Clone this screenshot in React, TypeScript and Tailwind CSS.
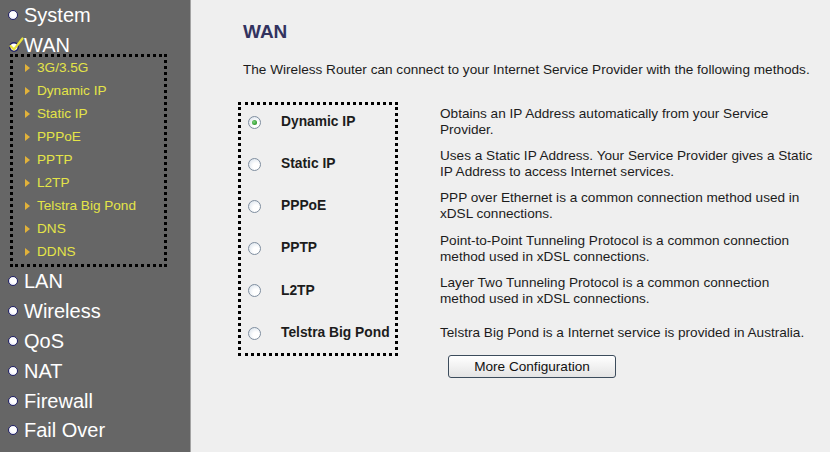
import React from "react";

const FONT = "font-['Liberation_Sans',Arial,Helvetica,sans-serif]";

function Bullet() {
  return (
    <span className="inline-block w-[10px] h-[10px] rounded-full border-[1.5px] border-[#23236a] bg-[radial-gradient(circle_at_60%_35%,#ffffff_45%,#ececf8_70%,#b0b0d8_100%)]" />
  );
}

function CheckIcon() {
  return (
    <svg width="16" height="15" viewBox="0 0 16 15" className="block">
      <circle cx="6" cy="10" r="4.2" fill="#ffffff" stroke="#23236a" strokeWidth="1.5" />
      <path d="M2.5 9 L6 12.5 L14.5 1.5" fill="none" stroke="#e8e23a" strokeWidth="2.2" strokeLinejoin="round" strokeLinecap="round" />
    </svg>
  );
}

function TopItem({ label, check }: { label: string; check?: boolean }) {
  return (
    <div className="h-[29.8px] flex items-center">
      {check ? (
        <span className="ml-[8px] w-[16px] flex items-center">
          <CheckIcon />
        </span>
      ) : (
        <span className="ml-[8px] mr-[6px] flex items-center">
          <Bullet />
        </span>
      )}
      <span className="text-[20px] leading-none text-white">{label}</span>
    </div>
  );
}

function SubItem({ label }: { label: string }) {
  return (
    <div className="h-[23px] flex items-center">
      <span className="ml-[12px] w-0 h-0 border-y-[4px] border-y-transparent border-l-[5px] border-l-[#e2b23a]" />
      <span className="ml-[7px] text-[13.6px] leading-none text-[#e4e448]">{label}</span>
    </div>
  );
}

function Radio({ checked }: { checked?: boolean }) {
  return (
    <span className="relative inline-flex items-center justify-center w-[13px] h-[13px] rounded-full border border-[#7f8e9f] bg-[radial-gradient(circle_at_65%_65%,#ffffff_30%,#e6ecf2_70%,#c9d2dc_100%)]">
      {checked && (
        <span className="w-[5px] h-[5px] rounded-full bg-[radial-gradient(circle_at_40%_40%,#7fd67f_0%,#2f9a2f_70%,#1f7a1f_100%)]" />
      )}
    </span>
  );
}

const rows: { label: string; checked?: boolean; desc: string[] }[] = [
  { label: "Dynamic IP", checked: true, desc: ["Obtains an IP Address automatically from your Service", "Provider."] },
  { label: "Static IP", desc: ["Uses a Static IP Address. Your Service Provider gives a Static", "IP Address to access Internet services."] },
  { label: "PPPoE", desc: ["PPP over Ethernet is a common connection method used in", "xDSL connections."] },
  { label: "PPTP", desc: ["Point-to-Point Tunneling Protocol is a common connection", "method used in xDSL connections."] },
  { label: "L2TP", desc: ["Layer Two Tunneling Protocol is a common connection", "method used in xDSL connections."] },
  { label: "Telstra Big Pond", desc: ["Telstra Big Pond is a Internet service is provided in Australia."] },
];

export default function App() {
  const subs = ["3G/3.5G", "Dynamic IP", "Static IP", "PPPoE", "PPTP", "L2TP", "Telstra Big Pond", "DNS", "DDNS"];
  return (
    <div className={`${FONT} w-[830px] h-[452px] overflow-hidden flex bg-[#efefef]`}>
      <aside className="w-[191px] h-full bg-[#666666] border-r border-[#a3a3a3] flex flex-col shrink-0">
        <TopItem label="System" />
        <TopItem label="WAN" check />
        <div className="ml-[10px] w-[157px] -mt-[6px] border-[3px] border-dotted border-black">
          {subs.map((s) => (
            <SubItem key={s} label={s} />
          ))}
        </div>
        <TopItem label="LAN" />
        <TopItem label="Wireless" />
        <TopItem label="QoS" />
        <TopItem label="NAT" />
        <TopItem label="Firewall" />
        <TopItem label="Fail Over" />
      </aside>
      <main className="flex-1 pl-[52px] pt-[20px] text-[#1c1c1c]">
        <h1 className="text-[19px] leading-[23px] font-bold text-[#33335f]">WAN</h1>
        <p className="mt-[19px] text-[13.6px] leading-[16px] whitespace-nowrap">
          The Wireless Router can connect to your Internet Service Provider with the following methods.
        </p>
        <div className="mt-[24px] -ml-[5px] flex items-start">
          <div className="w-[160px] border-[3px] border-dotted border-black">
            <div className="-mt-[4px] -mb-[1px]">
              {rows.map((r) => (
                <div key={r.label} className="h-[42.2px] flex items-center">
                  <span className="ml-[7px] flex items-center">
                    <Radio checked={r.checked} />
                  </span>
                  <span className="ml-[20px] text-[13.8px] font-bold whitespace-nowrap">{r.label}</span>
                </div>
              ))}
            </div>
          </div>
          <div className="ml-[42px] -mt-[1px] flex flex-col">
            {rows.map((r) => (
              <div key={r.label} className="h-[42.2px] flex flex-col justify-center text-[13.6px] leading-[16px]">
                {r.desc.map((d) => (
                  <div key={d} className="whitespace-nowrap">{d}</div>
                ))}
              </div>
            ))}
            <button className="ml-[8px] mt-[1px] w-[168px] h-[23px] rounded-[3px] border border-[#3c4c5c] bg-gradient-to-b from-white to-[#e4e4e4] text-[13.6px] leading-none text-[#111]">
              More Configuration
            </button>
          </div>
        </div>
      </main>
    </div>
  );
}
